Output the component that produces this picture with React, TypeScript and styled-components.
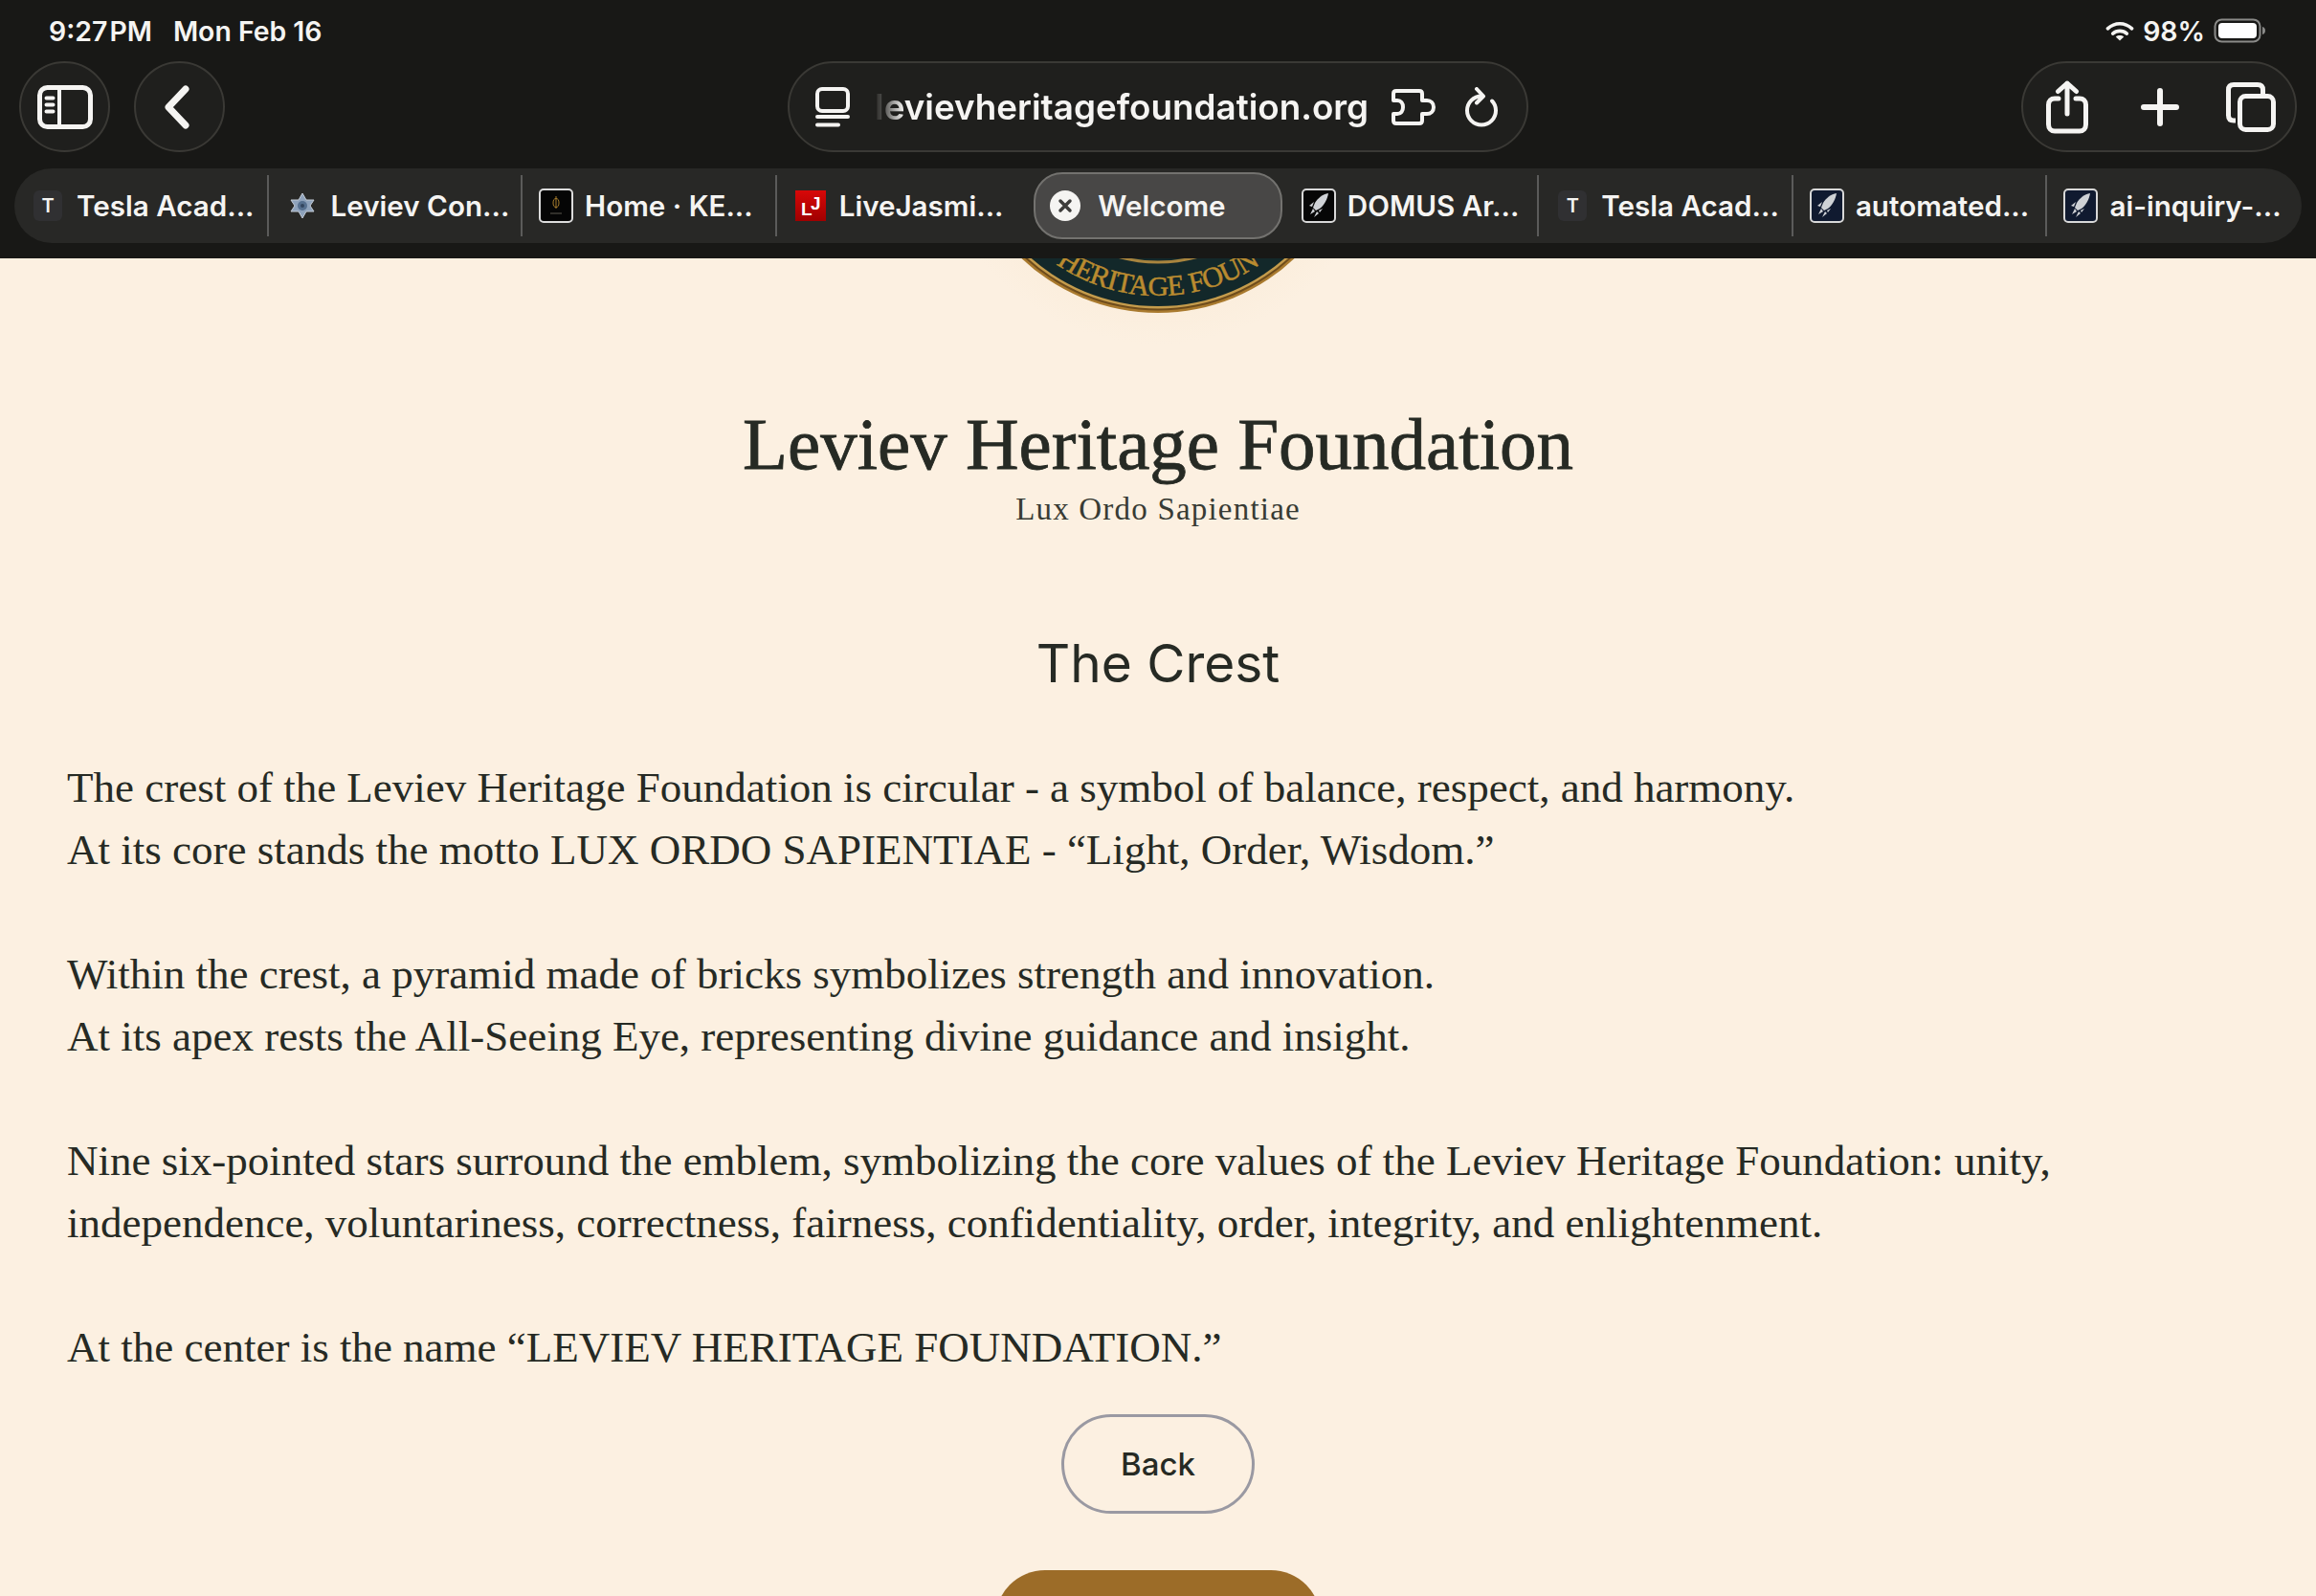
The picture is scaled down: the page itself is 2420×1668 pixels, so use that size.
import React from "react";
import styled, { createGlobalStyle } from "styled-components";

const GlobalStyle = createGlobalStyle`
  html, body {
    margin: 0;
    padding: 0;
    background: #fcf0e1;
  }
`;

const Screen = styled.div`
  width: 2420px;
  height: 1668px;
  overflow: hidden;
  display: flex;
  flex-direction: column;
  background: #fcf0e1;
`;

const Chrome = styled.header`
  height: 270px;
  flex: none;
  background: #181816;
  color: #f5f4f2;
  font-family: Inter, "Liberation Sans", sans-serif;
  display: flex;
  flex-direction: column;
`;

const StatusBar = styled.div`
  height: 64px;
  padding: 0 52px 0 51px;
  display: flex;
  align-items: center;
  justify-content: space-between;
  font-size: 28.4px;
  font-weight: 600;
`;

const StatusGroup = styled.div<{ $gap: number }>`
  display: flex;
  align-items: center;
  gap: ${(p) => p.$gap}px;
`;

const Clock = styled.span`
  word-spacing: -5px;
`;

const Toolbar = styled.div`
  height: 95px;
  padding: 0 20px;
  display: grid;
  grid-template-columns: 1fr 774px 1fr;
  column-gap: 20px;
`;

const ToolbarSide = styled.div<{ $end?: boolean }>`
  display: flex;
  gap: 25px;
  justify-content: ${(p) => (p.$end ? "flex-end" : "flex-start")};
`;

const Pill = styled.div`
  box-sizing: border-box;
  height: 95px;
  background: #1f1f1d;
  border: 2px solid #3a3935;
  border-radius: 48px;
  display: flex;
  align-items: center;
`;

const CircleButton = styled(Pill)`
  width: 95px;
  justify-content: center;
`;

const AddressPill = styled(Pill)`
  padding: 0 30px 0 27px;
  justify-content: space-between;
`;

const ActionPill = styled(Pill)`
  width: 288px;
  padding: 0 20px 0 24px;
  justify-content: space-between;
`;

const Url = styled.span`
  flex: 1;
  margin-left: 26px;
  font-size: 36.8px;
  font-weight: 600;
  white-space: nowrap;
  mask-image: linear-gradient(90deg, rgba(0, 0, 0, 0.05) 0, rgba(0, 0, 0, 0.25) 10px, #000 30px);
`;

const AddressActions = styled.div`
  display: flex;
  align-items: center;
  gap: 31px;
`;

const TabBar = styled.nav`
  margin: 17px 15px 0 15px;
  height: 78px;
  border-radius: 39px;
  background: #282826;
  display: grid;
  grid-template-columns: repeat(9, 1fr);
  align-items: center;
`;

const Tab = styled.div<{ $divider?: boolean }>`
  box-sizing: border-box;
  height: 64px;
  min-width: 0;
  padding-left: 17px;
  display: flex;
  align-items: center;
  gap: 12px;
  font-size: 29.6px;
  font-weight: 600;
  white-space: nowrap;
  border-right: 2px solid ${(p) => (p.$divider ? "#5b5b5a" : "transparent")};
`;

const ActiveTab = styled.div`
  box-sizing: border-box;
  height: 70px;
  margin: 0 3px;
  padding-left: 15px;
  display: flex;
  align-items: center;
  gap: 18px;
  font-size: 29.6px;
  font-weight: 600;
  background: #484746;
  border: 2px solid #73726f;
  border-radius: 30px;
`;

const IconBox = styled.span`
  width: 36px;
  height: 36px;
  flex: none;
  display: flex;
  align-items: center;
  justify-content: center;
`;

const LetterIcon = styled.span`
  width: 30px;
  height: 32px;
  border-radius: 6px;
  background: #303032;
  display: flex;
  align-items: center;
  justify-content: center;
  font-size: 20px;
  font-weight: 600;
`;

const Main = styled.main`
  flex: 1;
  min-height: 0;
  color: #262a24;
  display: flex;
  flex-direction: column;
  align-items: center;
`;

const CrestWindow = styled.div`
  height: 90px;
  flex: none;
  overflow: hidden;
  display: flex;
  align-items: flex-end;
`;

const Title = styled.h1`
  margin: 59px 0 0;
  font-family: "Liberation Serif", serif;
  font-size: 77px;
  line-height: 90px;
  font-weight: 400;
  -webkit-text-stroke: 0.8px #262a24;
`;

const Motto = styled.div`
  margin-top: 3px;
  color: #383b34;
  font-family: "Liberation Serif", serif;
  font-size: 33px;
  line-height: 40px;
  letter-spacing: 1.2px;
`;

const SectionTitle = styled.h2`
  margin: 107px 0 0;
  font-family: Inter, "Liberation Sans", sans-serif;
  font-size: 55px;
  line-height: 68px;
  font-weight: 400;
`;

const Rule = styled.div`
  width: 2280px;
  height: 3px;
  margin-top: 40px;
  background: #f9f3ec;
`;

const Body = styled.div`
  width: 2280px;
  margin-top: 24px;
  font-family: "Liberation Serif", serif;
  font-size: 45px;
  line-height: 65px;
`;

const Paragraph = styled.p`
  margin: 0 0 65px;
  &:last-child {
    margin-bottom: 0;
  }
`;

const BackButton = styled.button`
  box-sizing: border-box;
  flex: none;
  width: 202px;
  height: 104px;
  margin-top: 37px;
  padding: 0;
  background: transparent;
  border: 3px solid #9a99a2;
  border-radius: 52px;
  color: #262a24;
  font-family: Inter, "Liberation Sans", sans-serif;
  font-size: 33px;
  font-weight: 500;
`;

const BrownButton = styled.div`
  flex: none;
  width: 340px;
  height: 104px;
  margin-top: 59px;
  border-radius: 52px;
  background: #9c6c28;
`;

const Wifi = () => (
  <svg width="30" height="21" viewBox="0 0 28 20" fill="none" stroke="currentColor" strokeWidth="3.400" strokeLinecap="round">
    <path d="M2 7.500C9 1 19 1 26 7.500" />
    <path d="M7 12.500C11 9 17 9 21 12.500" />
    <path d="M14 19.500l-4-3.800c2.300-1.800 5.700-1.800 8 0z" fill="currentColor" stroke="none" />
  </svg>
);

const Battery = () => (
  <svg width="55" height="26" viewBox="0 0 55 26" fill="none">
    <rect x="1.500" y="1.500" width="47" height="23" rx="7" stroke="#8a8a88" strokeWidth="2" />
    <rect x="5" y="5" width="40" height="16" rx="4" fill="#fff" />
    <path d="M51 9c2 .6 3 2 3 4s-1 3.400-3 4z" fill="#8a8a88" />
  </svg>
);

const SidebarIcon = () => (
  <svg width="58" height="46" viewBox="0 0 58 46" fill="none" stroke="currentColor" strokeWidth="5">
    <rect x="2.500" y="2.500" width="53" height="41" rx="8" />
    <path d="M23 2.500v41" strokeWidth="4" />
    <path d="M9.500 13.500h7M9.500 20.500h7M9.500 27.500h7" strokeLinecap="round" strokeWidth="4" />
  </svg>
);

const ChevronIcon = () => (
  <svg width="40" height="46" viewBox="0 0 40 46" fill="none" stroke="currentColor" strokeWidth="7" strokeLinecap="round" strokeLinejoin="round">
    <path d="M26 4L8 23l18 19" />
  </svg>
);

const PageIcon = () => (
  <svg width="36" height="42" viewBox="0 0 36 42" fill="none" stroke="currentColor" strokeWidth="4" strokeLinecap="round">
    <rect x="2" y="2" width="32" height="23" rx="5" />
    <path d="M2 31h32M2 39.500h22" />
  </svg>
);

const PuzzleIcon = () => (
  <svg width="47" height="38" viewBox="0 0 47 38" fill="none" stroke="currentColor" strokeWidth="4" strokeLinejoin="round">
    <path d="M6 2h24c2 0 3 1 3 3v7h5c4 0 7 3 7 7s-3 7-7 7h-5v7c0 2-1 3-3 3H6c-2 0-3-1-3-3v-7h4c4 0 6-3 6-7s-2-7-6-7H3V5c0-2 1-3 3-3z" />
  </svg>
);

const ReloadIcon = () => (
  <svg width="34" height="42" viewBox="0 0 34 42" fill="none" stroke="currentColor" strokeWidth="4" strokeLinecap="round" strokeLinejoin="round">
    <path d="M17 9.500A15 15 0 1 0 32 24.500c0-4-1.500-7.500-4-10" />
    <path d="M12 2l7 7.500-7 7" />
  </svg>
);

const ShareIcon = () => (
  <svg width="44" height="56" viewBox="0 0 44 56" fill="none" stroke="currentColor" strokeWidth="5" strokeLinecap="round" strokeLinejoin="round">
    <path d="M13 19H9c-4 0-6.500 2.500-6.500 6.500V46c0 4 2.500 7 6.500 7h26c4 0 6.500-3 6.500-7V25.500c0-4-2.500-6.500-6.500-6.500h-4" />
    <path d="M22 35V3M12.500 11.500L22 3l9.500 8.500" />
  </svg>
);

const PlusIcon = () => (
  <svg width="46" height="40" viewBox="0 0 46 40" fill="none" stroke="currentColor" strokeWidth="6" strokeLinecap="round">
    <path d="M26 3v34M9 20h34" />
  </svg>
);

const TabsIcon = () => (
  <svg width="52" height="52" viewBox="0 0 52 52" fill="none" stroke="currentColor" strokeWidth="5" strokeLinejoin="round">
    <path d="M10 40H8c-3.500 0-5.500-2-5.500-5.500V8C2.500 4.500 4.500 2.500 8 2.500h25c3.500 0 5.500 2 5.500 5.500v6" />
    <rect x="14.500" y="14.500" width="35" height="35" rx="6" />
  </svg>
);

const StarFavicon = () => (
  <svg width="28" height="26" viewBox="0 0 28 26">
    <path d="M14 0l4 7h8l-4 6 4 6h-8l-4 7-4-7H2l4-6-4-6h8z" fill="#8ea2bb" stroke="#c4ccd6" strokeWidth="1" />
    <circle cx="14" cy="13" r="5" fill="#56708f" />
    <circle cx="14" cy="13" r="2" fill="#33465f" />
  </svg>
);

const FrameFavicon = styled.svg`
  width: 36px;
  height: 36px;
`;

const EmblemFavicon = () => (
  <FrameFavicon viewBox="0 0 36 36">
    <rect x="1" y="1" width="34" height="34" rx="4" fill="#050505" stroke="#dcdcdc" strokeWidth="2" />
    <ellipse cx="18" cy="15" rx="3" ry="4.500" fill="none" stroke="#a67c2c" strokeWidth="1" />
    <path d="M18 8v13" stroke="#a67c2c" strokeWidth="1" />
    <path d="M12 26h12" stroke="#5e5a50" strokeWidth="1" />
  </FrameFavicon>
);

const RocketFavicon = ({ $fill }: { $fill: string }) => (
  <FrameFavicon viewBox="0 0 36 36">
    <rect x="1" y="1" width="34" height="34" rx="4" fill={$fill} stroke="#d8d8d8" strokeWidth="2" />
    <path d="M28 5c-6 1-11 5-14 10l-2 5 3 3 4-2c5-4 8-10 9-16z" fill="#cfd2d6" />
    <path d="M13 14l-5 4 3 1zM22 21l-3 4-1-2zM12 21l-3 6 5-3zM16 24l-3 6 5-4z" fill="#cfd2d6" />
  </FrameFavicon>
);

const JasminFavicon = () => (
  <svg width="32" height="32" viewBox="0 0 32 32">
    <defs>
      <linearGradient id="jasmin" x1="0" y1="0" x2="0" y2="1">
        <stop offset="0" stopColor="#d80808" />
        <stop offset="1" stopColor="#a00000" />
      </linearGradient>
    </defs>
    <rect width="32" height="32" fill="url(#jasmin)" />
    <text x="6" y="26" fontFamily="Liberation Sans, sans-serif" fontSize="19" fontWeight="700" fill="#fff">L</text>
    <text x="16" y="20" fontFamily="Liberation Sans, sans-serif" fontSize="19" fontWeight="700" fill="#fff">J</text>
  </svg>
);

const CloseFavicon = () => (
  <svg width="32" height="32" viewBox="0 0 32 32">
    <circle cx="16" cy="16" r="16" fill="#f5f4f2" />
    <path d="M11 11l10 10M21 11L11 21" stroke="#3d3c3b" strokeWidth="3.500" strokeLinecap="round" />
  </svg>
);

const Crest = () => (
  <svg width="480" height="480" viewBox="0 0 480 480">
    <defs>
      <radialGradient id="crestGlow">
        <stop offset="0.85" stopColor="#fbeedd" />
        <stop offset="1" stopColor="#fcf0e1" />
      </radialGradient>
      <path id="crestArc" d="M51 240A189 189 0 0 0 429 240" />
    </defs>
    <circle cx="240" cy="240" r="240" fill="url(#crestGlow)" />
    <circle cx="240" cy="240" r="207" fill="#a97a2e" />
    <circle cx="240" cy="240" r="204.500" fill="#6e4c1c" />
    <circle cx="240" cy="240" r="202.500" fill="#c59c4c" />
    <circle cx="240" cy="240" r="200" fill="#13282a" />
    <circle cx="240" cy="240" r="154" fill="#13282a" stroke="#a8843e" strokeWidth="3" />
    <text fontFamily="Liberation Serif, serif" fontSize="30" fill="#b98b30" stroke="#b98b30" strokeWidth="0.5" letterSpacing="-0.8">
      <textPath href="#crestArc" startOffset="50%" textAnchor="middle">HERITAGE FOUN</textPath>
    </text>
  </svg>
);

const tabsBefore = [
  { title: "Tesla Acad...", icon: <LetterIcon>T</LetterIcon>, divider: true },
  { title: "Leviev Con...", icon: <StarFavicon />, divider: true },
  { title: "Home · KE...", icon: <EmblemFavicon />, divider: true },
  { title: "LiveJasmi...", icon: <JasminFavicon />, divider: false }
];

const tabsAfter = [
  { title: "DOMUS Ar...", icon: <RocketFavicon $fill="#060606" />, divider: true },
  { title: "Tesla Acad...", icon: <LetterIcon>T</LetterIcon>, divider: true },
  { title: "automated...", icon: <RocketFavicon $fill="#101a30" />, divider: true },
  { title: "ai-inquiry-...", icon: <RocketFavicon $fill="#101a30" />, divider: false }
];

function App() {
  return (
    <Screen>
      <GlobalStyle />
      <Chrome>
        <StatusBar>
          <StatusGroup $gap={22}>
            <Clock>9:27 PM</Clock>
            <span>Mon Feb 16</span>
          </StatusGroup>
          <StatusGroup $gap={9}>
            <Wifi />
            <span>98%</span>
            <Battery />
          </StatusGroup>
        </StatusBar>
        <Toolbar>
          <ToolbarSide>
            <CircleButton>
              <SidebarIcon />
            </CircleButton>
            <CircleButton>
              <ChevronIcon />
            </CircleButton>
          </ToolbarSide>
          <AddressPill>
            <PageIcon />
            <Url>levievheritagefoundation.org</Url>
            <AddressActions>
              <PuzzleIcon />
              <ReloadIcon />
            </AddressActions>
          </AddressPill>
          <ToolbarSide $end>
            <ActionPill>
              <ShareIcon />
              <PlusIcon />
              <TabsIcon />
            </ActionPill>
          </ToolbarSide>
        </Toolbar>
        <TabBar>
          {tabsBefore.map((t, i) => (
            <Tab key={i} $divider={t.divider}>
              <IconBox>{t.icon}</IconBox>
              <span>{t.title}</span>
            </Tab>
          ))}
          <ActiveTab>
            <CloseFavicon />
            <span>Welcome</span>
          </ActiveTab>
          {tabsAfter.map((t, i) => (
            <Tab key={i} $divider={t.divider}>
              <IconBox>{t.icon}</IconBox>
              <span>{t.title}</span>
            </Tab>
          ))}
        </TabBar>
      </Chrome>
      <Main>
        <CrestWindow>
          <Crest />
        </CrestWindow>
        <Title>Leviev Heritage Foundation</Title>
        <Motto>Lux Ordo Sapientiae</Motto>
        <SectionTitle>The Crest</SectionTitle>
        <Rule />
        <Body>
          <Paragraph>
            The crest of the Leviev Heritage Foundation is circular - a symbol of balance, respect, and harmony.
            <br />
            At its core stands the motto LUX ORDO SAPIENTIAE - “Light, Order, Wisdom.”
          </Paragraph>
          <Paragraph>
            Within the crest, a pyramid made of bricks symbolizes strength and innovation.
            <br />
            At its apex rests the All-Seeing Eye, representing divine guidance and insight.
          </Paragraph>
          <Paragraph>
            Nine six-pointed stars surround the emblem, symbolizing the core values of the Leviev Heritage Foundation: unity,
            independence, voluntariness, correctness, fairness, confidentiality, order, integrity, and enlightenment.
          </Paragraph>
          <Paragraph>At the center is the name “LEVIEV HERITAGE FOUNDATION.”</Paragraph>
        </Body>
        <BackButton>Back</BackButton>
        <BrownButton />
      </Main>
    </Screen>
  );
}

export default App;
